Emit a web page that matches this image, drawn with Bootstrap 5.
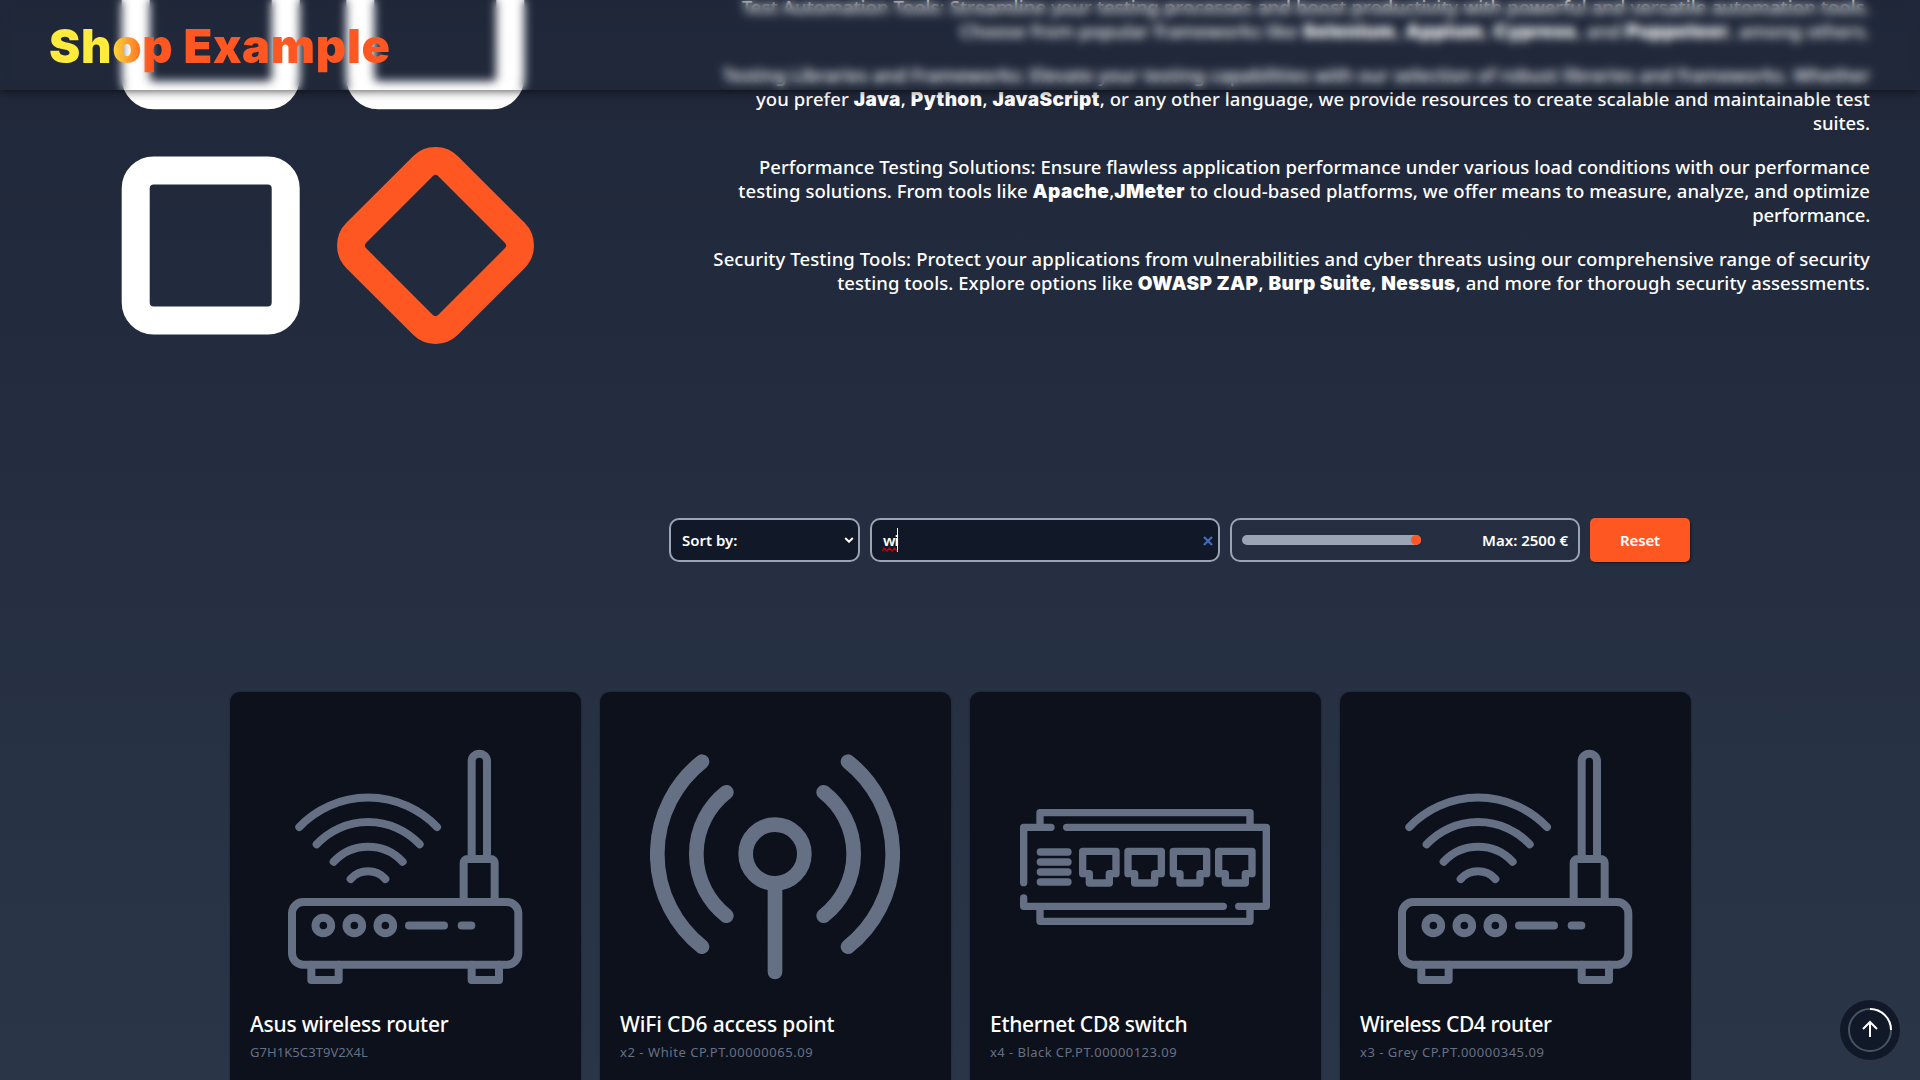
<!DOCTYPE html>
<html lang="en">
<head>
<meta charset="utf-8">
<title>Shop Example</title>
<link href="https://cdn.jsdelivr.net/npm/bootstrap@5.3.0/dist/css/bootstrap.min.css" rel="stylesheet">
<style>
body{height:1080px;overflow:hidden;font-family:"Noto Sans",sans-serif;font-weight:500;color:#fff;background:linear-gradient(#1f2739,#2a3648)}
.site-head{height:90px;padding:0 50px;backdrop-filter:blur(5px);box-shadow:0 0 10px rgba(0,0,0,.8)}
.brand{font-family:Inter,sans-serif;font-size:47px;font-weight:900;line-height:60px;letter-spacing:.7px;margin:1px 0 0 -1px;background:linear-gradient(90deg,#ffeb3b 17%,#ff5722 29%);-webkit-background-clip:text;background-clip:text;color:transparent}
.hero{height:344px;padding:0 50px 0 120px;overflow:hidden}
.art{width:415px;height:409px}
.copy{font-size:18.5px;line-height:24px;margin-bottom:49px;white-space:nowrap}
.copy p{margin:0 0 20px}
.copy p:last-child{margin:0}
.copy b{font-family:Inter,sans-serif;font-size:19px;line-height:20px;font-weight:900;letter-spacing:.4px}
.ln{display:block;height:24px}
.l1{letter-spacing:.08px}.l2{letter-spacing:.12px}.l3{letter-spacing:-.01px}.l4{letter-spacing:.09px}.l5{letter-spacing:-.05px}
.l6{letter-spacing:.04px}.l7{letter-spacing:.05px}.l8{letter-spacing:-.2px}.l9{letter-spacing:.11px}.l10{letter-spacing:.06px}
.filters{margin-top:174px;padding-right:230px;gap:10px;font-size:15px;line-height:20px;font-weight:600}
.field{height:44px;border:2px solid #9aa4b5;border-radius:10px;padding:0 10px 0 11px}
.dark{background:#111827}
.w-sort{width:191px}.w-wide{width:350px}
.sort-arrow{width:10px;height:6px;margin-right:-6px;margin-top:-1px}
.typed{letter-spacing:-.9px}
.caret{width:1px;height:24px;top:-2px;left:14px;background:#fff}
.wave{left:-1px;top:17px;width:16px;height:5px}
.clear{width:10px;height:10px;margin-right:-5px;margin-top:2px}
.range{appearance:none;-webkit-appearance:none;width:179px;height:10px;border-radius:5px;background:#9aa4b5;margin:0 0 0 -1px}
.range::-webkit-slider-thumb{-webkit-appearance:none;width:10px;height:10px;border-radius:50%;background:#ff5722}
.btn-reset{width:100px;height:44px;background:#ff5722;border:0;border-radius:5px;color:#fff;font-size:15px;font-weight:600;padding:0;letter-spacing:-.15px;box-shadow:1px 1px 2px rgba(0,0,0,.5)}
.goods{margin:130px 229px 0 230px;gap:19px}
.item{width:351px;height:420px;flex:none;background:#0d111c;border-radius:10px;box-shadow:0 0 2px rgba(13,17,28,.6);padding:50px 20px 0}
.pic{width:250px;height:250px;display:block;margin:0 0 0 30px;fill:none;stroke:#667085;stroke-linecap:round;stroke-linejoin:round}
.item h2{font-size:21px;font-weight:500;line-height:28px;margin:17.5px 0 0;white-space:nowrap}
.item p{font-size:13px;font-weight:400;line-height:18px;margin:5px 0 0;color:#667085;white-space:nowrap}
.t1{letter-spacing:-.23px}.t2{letter-spacing:-.13px}.t3{letter-spacing:-.3px}.t4{letter-spacing:-.4px}
.c1{letter-spacing:.07px}.c2{letter-spacing:.56px}.c3{letter-spacing:.45px}.c4{letter-spacing:.52px}
.to-top{right:20px;bottom:20px;width:60px;height:60px}
</style>
<script src="https://cdn.jsdelivr.net/npm/bootstrap@5.3.0/dist/js/bootstrap.bundle.min.js"></script>
</head>
<body>
<header class="site-head fixed-top d-flex align-items-center"><div class="brand">Shop Example</div></header>
<main>
<section class="hero d-flex align-items-end justify-content-between">
<svg class="art" viewBox="120 -65 415 409" fill="none" stroke="#fff" stroke-width="28">
<rect x="135.7" y="-54.7" width="150" height="150" rx="18"/>
<rect x="360.3" y="-54.7" width="150" height="150" rx="18"/>
<rect x="135.7" y="170.5" width="150" height="150" rx="18"/>
<rect x="370.5" y="180.5" width="130" height="130" rx="18" stroke="#ff5722" transform="rotate(45 435.5 245.5)"/>
</svg>
<div class="copy text-end">
<p><span class="ln l1">Test Automation Tools: Streamline your testing processes and boost productivity with powerful and versatile automation tools.</span>
<span class="ln l2">Choose from popular frameworks like <b>Selenium</b>, <b>Appium</b>, <b>Cypress</b>, and <b>Puppeteer</b>, among others.</span></p>
<p><span class="ln l3">Testing Libraries and Frameworks: Elevate your testing capabilities with our selection of robust libraries and frameworks. Whether</span>
<span class="ln l4">you prefer <b>Java</b>, <b>Python</b>, <b>JavaScript</b>, or any other language, we provide resources to create scalable and maintainable test</span>
<span class="ln l5">suites.</span></p>
<p><span class="ln l6">Performance Testing Solutions: Ensure flawless application performance under various load conditions with our performance</span>
<span class="ln l7">testing solutions. From tools like <b>Apache</b>,<b>JMeter</b> to cloud-based platforms, we offer means to measure, analyze, and optimize</span>
<span class="ln l8">performance.</span></p>
<p><span class="ln l9">Security Testing Tools: Protect your applications from vulnerabilities and cyber threats using our comprehensive range of security</span>
<span class="ln l10">testing tools. Explore options like <b>OWASP ZAP</b>, <b>Burp Suite</b>, <b>Nessus</b>, and more for thorough security assessments.</span></p>
</div>
</section>
<section class="filters d-flex justify-content-end">
<div class="field dark w-sort d-flex align-items-center justify-content-between"><span>Sort by:</span>
<svg class="sort-arrow" viewBox="0 0 10 6" fill="none" stroke="#fff" stroke-width="2"><path d="M1.2 1 5 4.7 8.8 1"/></svg></div>
<div class="field dark w-wide d-flex align-items-center justify-content-between"><span class="typed position-relative">wi<i class="caret position-absolute"></i>
<svg class="wave position-absolute" viewBox="0 0 16 5" fill="none" stroke="#d00000" stroke-width="1.2"><path d="M0 4 2 1 5 4 7.500 1 10 4 12.500 1 15 4"/></svg></span>
<svg class="clear" viewBox="0 0 10 10" stroke="#3f6ab8" stroke-width="2.400"><path d="M1 1 9 9M9 1 1 9"/></svg></div>
<div class="field w-wide d-flex align-items-center justify-content-between"><input class="range" type="range" min="0" max="2500" value="2500"><span>Max: 2500 €</span></div>
<button class="btn-reset btn">Reset</button>
</section>
<section class="goods d-flex">
<article class="item">
<svg class="pic" viewBox="180 186 750 750"><g id="router" stroke-width="24">
<rect x="216" y="666" width="679" height="188" rx="34"/>
<path d="M755 537V244a22.500 22.500 0 0 1 46 0V537M731 666V549a12 12 0 0 1 12-12H812a12 12 0 0 1 12 12V666M274 854V900H356V854M755 854V900H837V854M567 736.500H672M725 736.500H754"/>
<path d="M238 441A286 286 0 0 1 651 441M290 493A211.600 211.600 0 0 1 599 493M341 545A141.500 141.500 0 0 1 548 545M392 597A70.300 70.300 0 0 1 496 597"/>
<circle cx="310" cy="736.500" r="23.500"/><circle cx="403" cy="736.500" r="23.500"/><circle cx="496" cy="736.500" r="23.500"/></g></svg>
<h2 class="t1">Asus wireless router</h2><p class="c1">G7H1K5C3T9V2X4L</p>
</article>
<article class="item">
<svg class="pic" viewBox="180 186 750 750" stroke-width="44">
<circle cx="555" cy="522" r="88"/><path d="M555 612V876M409 337A235 235 0 0 0 409 707M336 245A354 354 0 0 0 336 800M701 337A235 235 0 0 1 701 707M774 245A354 354 0 0 1 774 800"/></svg>
<h2 class="t2">WiFi CD6 access point</h2><p class="c2">x2 - White CP.PT.00000065.09</p>
</article>
<article class="item">
<svg class="pic" viewBox="180 186 750 750" stroke-width="22">
<path d="M240 442V398H870V442M273 442H191V608M320 442H919V679H836M191 654V679H790M240 679V724H870V679M241 516H324M241 546H324M241 576H324M241 606H324"/>
<path d="M368 514H468V581H448V609H388V581H368ZM504 514H604V581H584V609H524V581H504ZM640 514H740V581H720V609H660V581H640ZM776 514H876V581H856V609H796V581H776Z"/></svg>
<h2 class="t3">Ethernet CD8 switch</h2><p class="c3">x4 - Black CP.PT.00000123.09</p>
</article>
<article class="item">
<svg class="pic" viewBox="180 186 750 750"><use href="#router"/></svg>
<h2 class="t4">Wireless CD4 router</h2><p class="c4">x3 - Grey CP.PT.00000345.09</p>
</article>
</section>
</main>
<svg class="to-top position-fixed" viewBox="0 0 60 60" fill="none">
<circle cx="30" cy="30" r="30" fill="#111827"/><circle cx="30" cy="30" r="21" stroke="#475467" stroke-width="2"/>
<path d="M30 9A21 21 0 0 1 51 30" stroke="#fff" stroke-width="2"/><path d="M30 37V22.500M23 29 30 22 37 29" stroke="#fff" stroke-width="2"/>
</svg>
</body>
</html>
